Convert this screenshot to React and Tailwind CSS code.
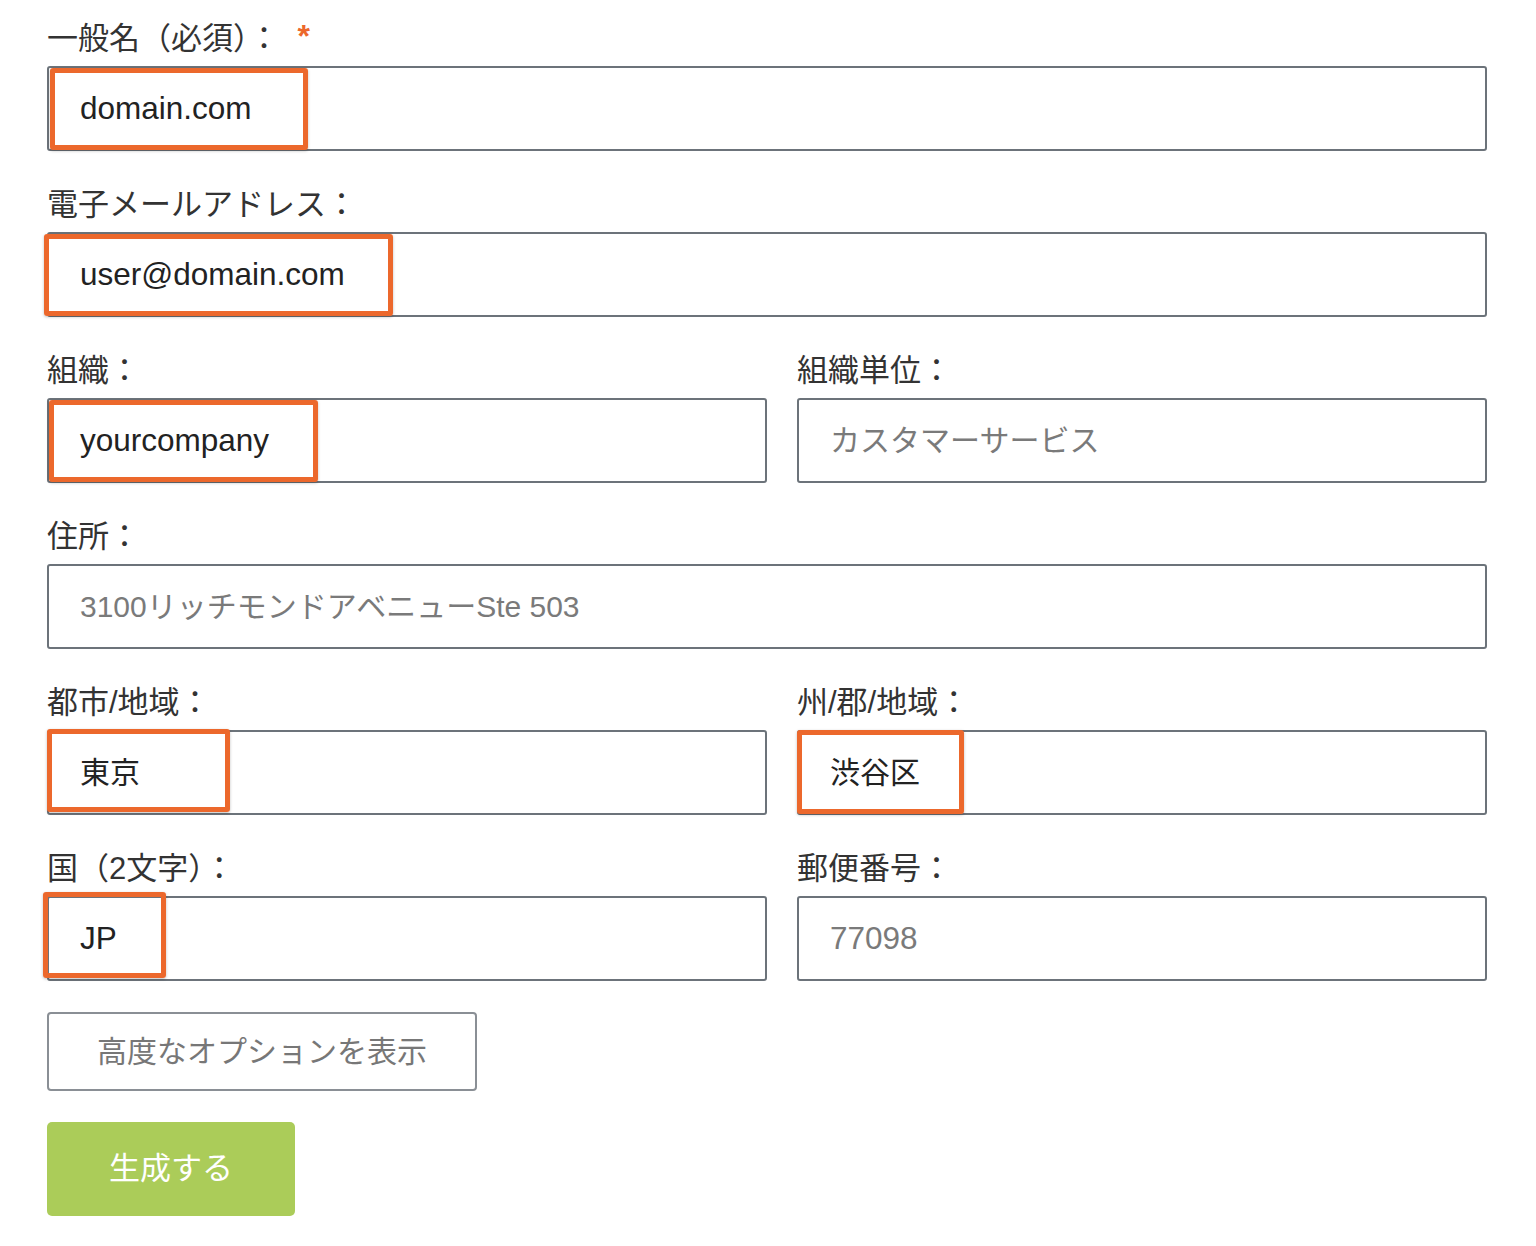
import React from "react";

const font = { fontFamily: '"Liberation Sans", "Noto Sans CJK JP", sans-serif' };

function Mark({ className }) {
  return (
    <div
      className={`pointer-events-none absolute rounded-[3px] border-[5px] border-[#ec682c] shadow-[0_1px_3px_rgba(0,0,0,0.25)] ${className}`}
    />
  );
}

// latin text in the inputs runs a bit larger than the kana
function Field({ label, required, value, placeholder, latin, mark }) {
  const size = latin ? "text-[31.5px]" : "text-[30px]";
  return (
    <div className="flex flex-col">
      <label className="h-[42px] text-[31px] leading-[42px] text-[#333]">
        {label}
        {required && (
          <span className="relative top-[-2px] ml-[18px] text-[32px] font-bold leading-none text-[#ec682c]">*</span>
        )}
      </label>
      <div className="relative mt-[6px]">
        <div className={`flex h-[85px] items-center rounded-[3px] border-2 border-[#6c737a] bg-white pl-[31px] ${size}`}>
          {value ? (
            <span className="text-[#222]">{value}</span>
          ) : (
            <span className="text-[#7a7a7a]">{placeholder}</span>
          )}
        </div>
        {mark}
      </div>
    </div>
  );
}

export default function App() {
  return (
    <div className="min-h-[1246px] w-[1536px] bg-white" style={font}>
      <div className="flex w-[1487px] flex-col gap-[33px] pl-[47px] pt-[18px]">
        <Field
          label="一般名（必須）："
          required
          latin
          value="domain.com"
          mark={<Mark className="left-[3px] top-[2px] h-[82px] w-[258px]" />}
        />
        <Field
          label="電子メールアドレス："
          latin
          value="user@domain.com"
          mark={<Mark className="left-[-3px] top-[2px] h-[82px] w-[349px]" />}
        />
        <div className="grid grid-cols-[720px_690px] gap-x-[30px]">
          <Field
            label="組織："
            latin
            value="yourcompany"
            mark={<Mark className="left-[2px] top-[2px] h-[82px] w-[269px]" />}
          />
          <Field label="組織単位：" placeholder="カスタマーサービス" />
        </div>
        <Field label="住所：" placeholder="3100リッチモンドアベニューSte 503" />
        <div className="grid grid-cols-[720px_690px] gap-x-[30px]">
          <Field
            label="都市/地域："
            value="東京"
            mark={<Mark className="left-[0px] top-[-1px] h-[83px] w-[183px]" />}
          />
          <Field
            label="州/郡/地域："
            value="渋谷区"
            mark={<Mark className="left-[0px] top-[0px] h-[84px] w-[167px]" />}
          />
        </div>
        <div className="grid grid-cols-[720px_690px] gap-x-[30px]">
          <Field
            label="国（2文字）："
            latin
            value="JP"
            mark={<Mark className="left-[-4px] top-[-4px] h-[86px] w-[123px]" />}
          />
          <Field label="郵便番号：" latin placeholder="77098" />
        </div>
        <div className="-mt-[2px] flex flex-col items-start gap-[31px]">
          <button className="flex h-[79px] w-[430px] items-center justify-center rounded-[4px] border-2 border-[#8a8f95] bg-white text-[30px] text-[#777]">
            高度なオプションを表示
          </button>
          <button className="flex h-[94px] w-[248px] items-center justify-center rounded-[5px] bg-[#abcc59] text-[31px] text-white">
            生成する
          </button>
        </div>
      </div>
    </div>
  );
}
